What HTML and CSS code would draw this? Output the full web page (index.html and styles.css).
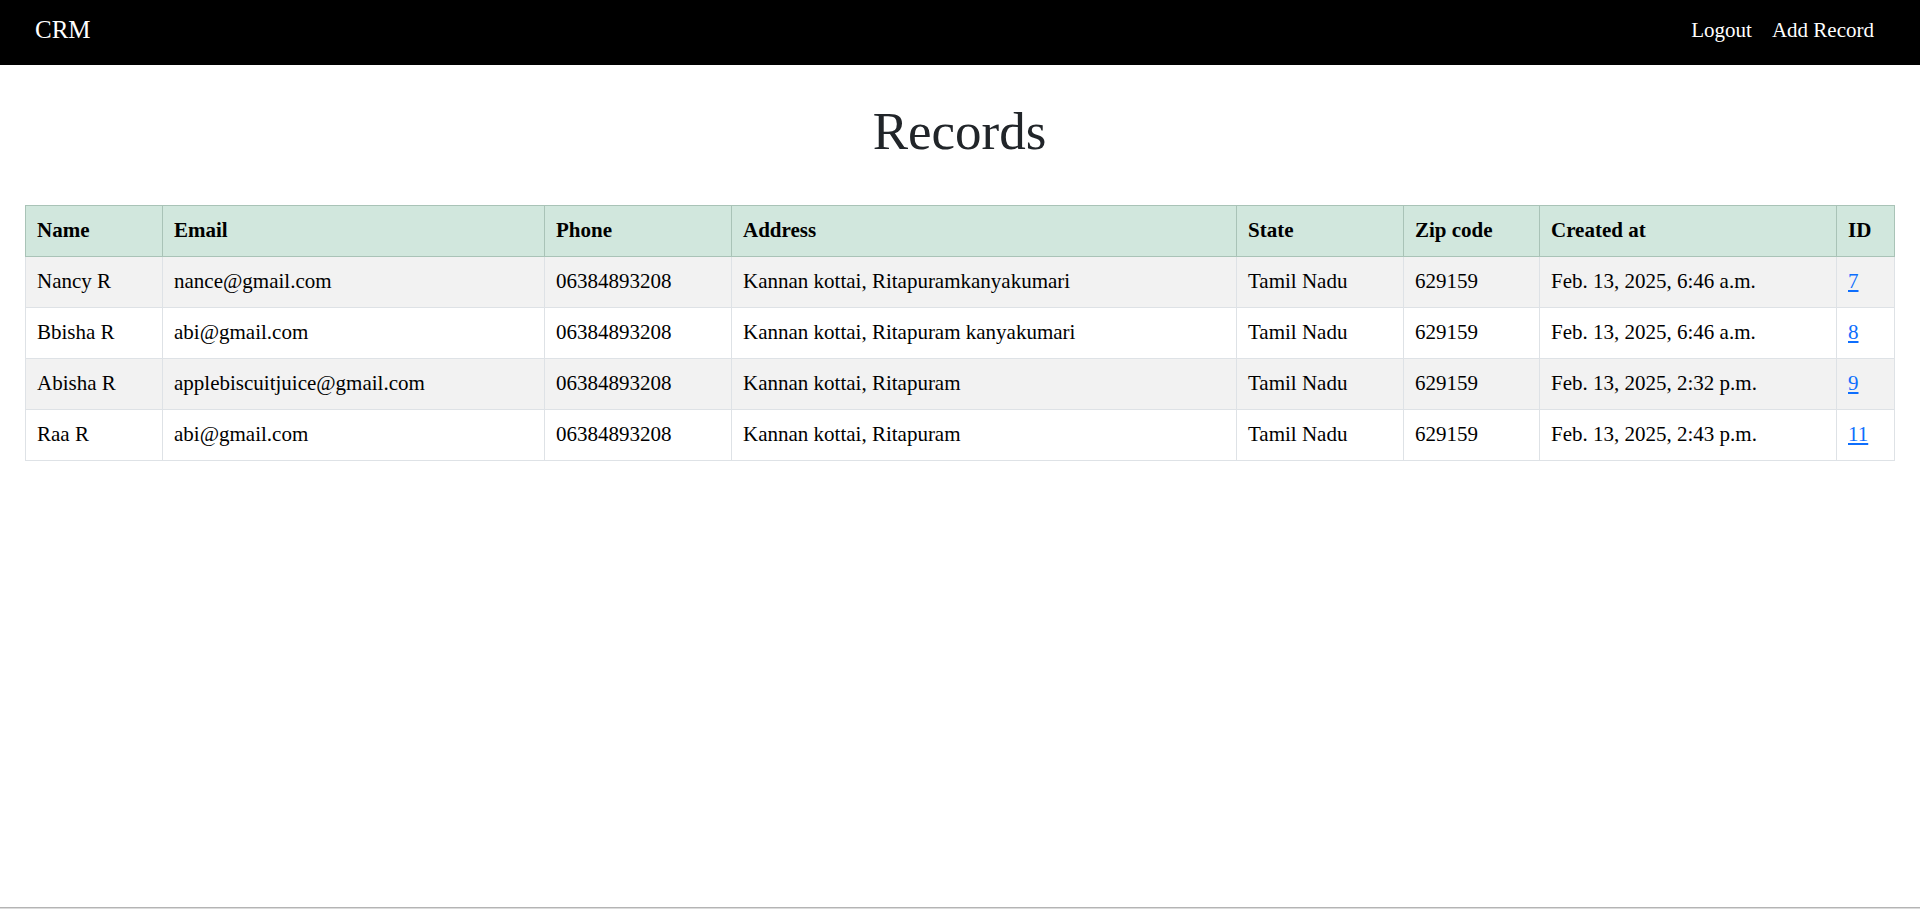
FILE: index.html
```html
<!DOCTYPE html>
<html lang="en">
<head>
<meta charset="utf-8">
<title>CRM</title>
<link rel="stylesheet" href="styles.css">
</head>
<body>
<nav class="navbar">
  <a class="brand" href="#">CRM</a>
  <div class="nav-links">
    <a class="nav-link" href="#">Logout</a>
    <a class="nav-link" href="#">Add Record</a>
  </div>
</nav>
<main class="container">
  <h1 class="title">Records</h1>
  <table class="records">
    <colgroup>
      <col class="c-name"><col class="c-email"><col class="c-phone"><col class="c-address">
      <col class="c-state"><col class="c-zip"><col class="c-created"><col class="c-id">
    </colgroup>
    <thead>
      <tr>
        <th>Name</th><th>Email</th><th>Phone</th><th>Address</th><th>State</th><th>Zip code</th><th>Created at</th><th>ID</th>
      </tr>
    </thead>
    <tbody>
      <tr>
        <td>Nancy R</td><td>nance@gmail.com</td><td>06384893208</td><td>Kannan kottai, Ritapuramkanyakumari</td><td>Tamil Nadu</td><td>629159</td><td>Feb. 13, 2025, 6:46 a.m.</td><td><a href="#">7</a></td>
      </tr>
      <tr>
        <td>Bbisha R</td><td>abi@gmail.com</td><td>06384893208</td><td>Kannan kottai, Ritapuram kanyakumari</td><td>Tamil Nadu</td><td>629159</td><td>Feb. 13, 2025, 6:46 a.m.</td><td><a href="#">8</a></td>
      </tr>
      <tr>
        <td>Abisha R</td><td>applebiscuitjuice@gmail.com</td><td>06384893208</td><td>Kannan kottai, Ritapuram</td><td>Tamil Nadu</td><td>629159</td><td>Feb. 13, 2025, 2:32 p.m.</td><td><a href="#">9</a></td>
      </tr>
      <tr>
        <td>Raa R</td><td>abi@gmail.com</td><td>06384893208</td><td>Kannan kottai, Ritapuram</td><td>Tamil Nadu</td><td>629159</td><td>Feb. 13, 2025, 2:43 p.m.</td><td><a href="#">11</a></td>
      </tr>
    </tbody>
  </table>
</main>
<div class="bottom-edge"></div>
</body>
</html>
```

FILE: styles.css
```css
* { box-sizing: border-box; }

html, body {
  margin: 0;
  padding: 0;
  background: #ffffff;
}

body {
  font-family: "Liberation Serif", "Times New Roman", serif;
  color: #000000;
}

.navbar {
  height: 65px;
  background: #000000;
  display: flex;
  align-items: center;
  justify-content: space-between;
  padding: 0 46px 0 35px;
}

.brand {
  color: #ffffff;
  text-decoration: none;
  font-size: 25px;
  line-height: 1;
  padding-bottom: 7px;
}

.nav-links {
  display: flex;
  gap: 20px;
  padding-bottom: 5px;
}

.nav-link {
  color: #ffffff;
  text-decoration: none;
  font-size: 21px;
  line-height: 1;
}

.container {
  padding: 0 26px 0 25px;
}

.title {
  margin: 35px 0 41px;
  text-align: center;
  font-size: 53px;
  line-height: 1.2;
  font-weight: 400;
  color: #212529;
}

.records {
  width: 100%;
  border-collapse: collapse;
  table-layout: fixed;
  font-size: 21px;
}

.c-name { width: 137px; }
.c-email { width: 382px; }
.c-phone { width: 187px; }
.c-address { width: 505px; }
.c-state { width: 167px; }
.c-zip { width: 136px; }
.c-created { width: 297px; }
.c-id { width: 58px; }

.records th,
.records td {
  height: 51px;
  padding: 0 11px;
  text-align: left;
  vertical-align: middle;
  white-space: nowrap;
  border: 1px solid #dee2e6;
}

.records thead th {
  background: #d1e7dd;
  border-color: #a9c3b7;
  font-weight: 700;
}

.records tbody tr:nth-child(odd) td {
  background: #f2f2f2;
}

.records a {
  color: #0d6efd;
  text-decoration: underline;
}

.bottom-edge {
  position: fixed;
  left: 0;
  right: 0;
  bottom: 0;
  height: 2px;
  border-top: 1px solid #b4b4b4;
  background: #dcdcdc;
}
```
